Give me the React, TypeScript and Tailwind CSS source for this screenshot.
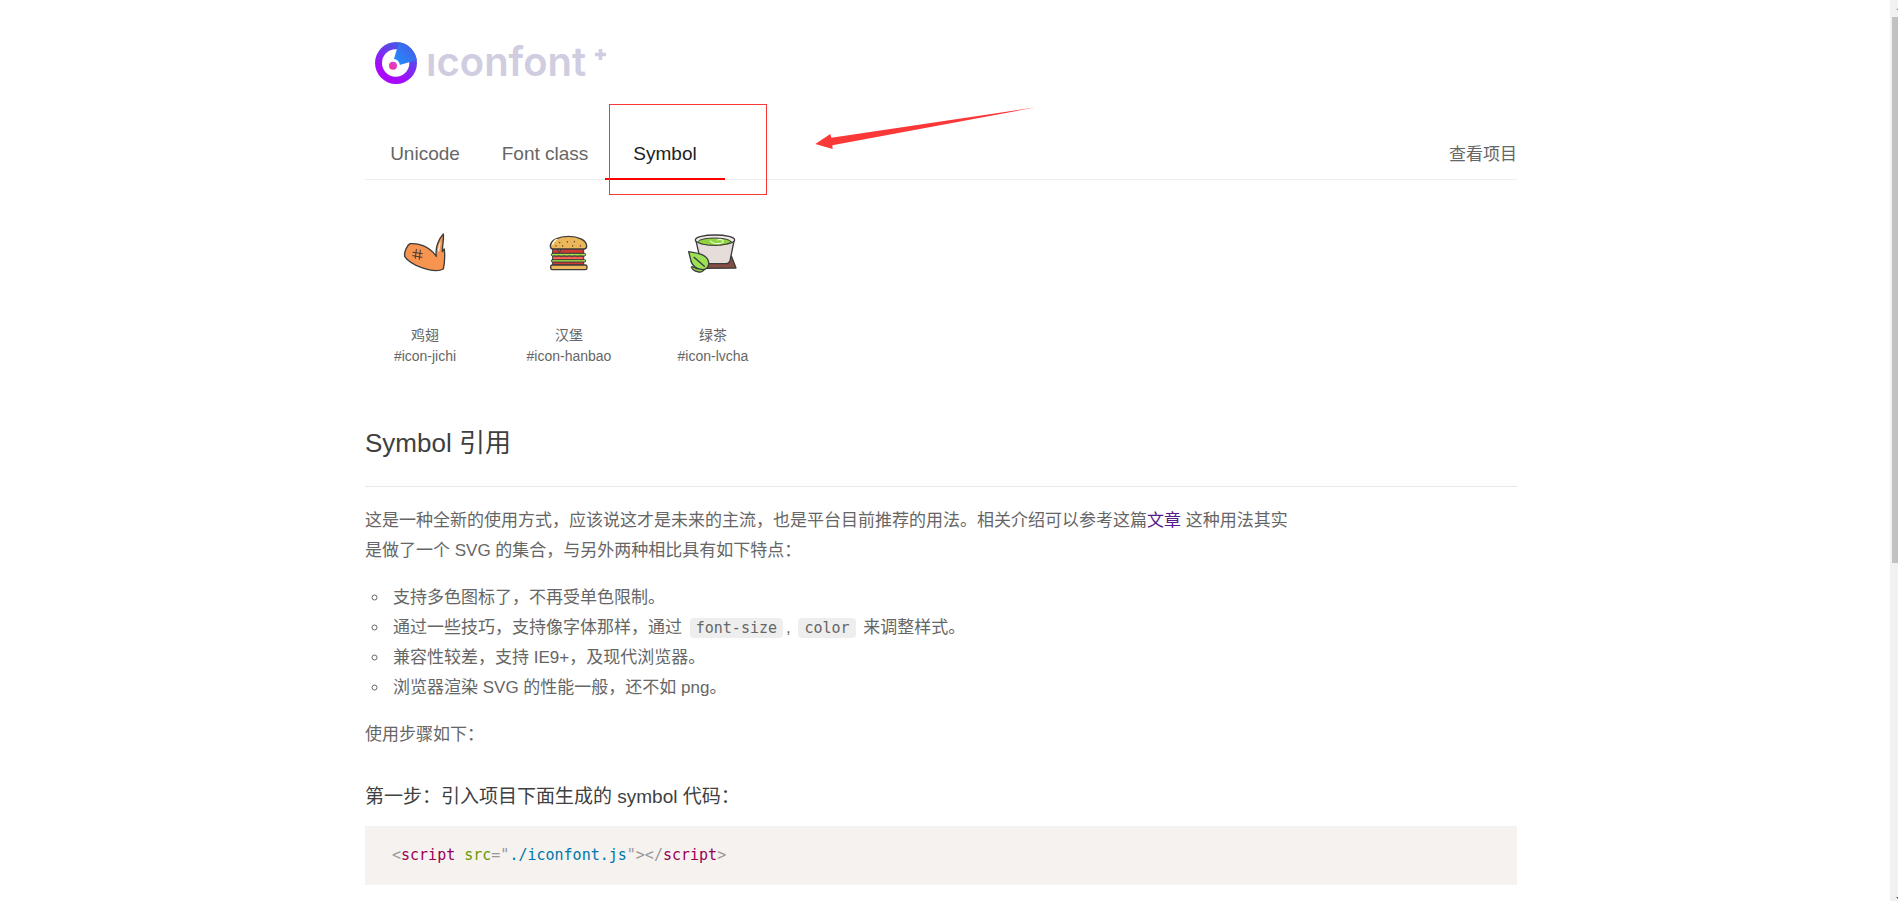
import React from 'react';

const Logo: React.FC = () => (
  <a href="#" className="flex items-center gap-[9px] pl-2.5" aria-label="iconfont">
    <svg className="h-[42px] w-[42px]" viewBox="45 36 126 126">
      <defs>
        <linearGradient id="ring" x1="0.2" y1="1" x2="0.8" y2="0">
          <stop offset="0" stopColor="#b400ff" />
          <stop offset="0.3" stopColor="#a010fa" />
          <stop offset="1" stopColor="#2f6be0" />
        </linearGradient>
        <linearGradient id="wedge" x1="0" y1="1" x2="1" y2="0">
          <stop offset="0" stopColor="#1f93ff" />
          <stop offset="1" stopColor="#4a55e2" />
        </linearGradient>
        <linearGradient id="dot" x1="0" y1="1" x2="1" y2="0">
          <stop offset="0" stopColor="#f5339b" />
          <stop offset="1" stopColor="#d840d8" />
        </linearGradient>
      </defs>
      <circle cx="108" cy="99" r="63" fill="url(#ring)" />
      <circle cx="107" cy="99" r="41" fill="#fff" />
      <path d="M117 37 A63 63 0 0 1 170 90 L119 105 L100 93 Z" fill="url(#wedge)" />
      <circle cx="98" cy="108" r="22" fill="#fff" />
      <circle cx="99" cy="107" r="12" fill="url(#dot)" />
    </svg>
    <span className="pb-0.5 font-[Inter,sans-serif] text-[40px] leading-10 font-semibold text-[#cfcddf]">ıconfont</span>
    <svg className="h-[42px] w-3" viewBox="0 0 12 42">
      <path d="M0 12.500h11M5.500 7v11" stroke="#cfcddf" strokeWidth="3.600" />
    </svg>
  </a>
);

const WingIcon: React.FC = () => (
  <svg className="h-[50px] w-[50px]" viewBox="60 39 150 150" strokeLinejoin="round" strokeLinecap="round">
    <path
      d="M90 86 C112 84 146 91 169 124 C165 98 176 72 190 57 C192 74 187 88 187 110 L193 102 C195 124 194 146 190 162 C176 170 150 167 125 158 C104 150 82 137 74 124 C72 112 80 92 90 86 Z"
      fill="#f79450"
      stroke="#3c3c3c"
      strokeWidth="4"
    />
    <path d="M174 112 C173 98 177 86 182 78 L179 105 Z" fill="#fde3d2" />
    <path d="M109 103 L106 130 M121 105 L118 133 M99 112 L127 116 M98 122 L126 127" fill="none" stroke="#3c3c3c" strokeWidth="3" />
  </svg>
);

const BurgerIcon: React.FC = () => (
  <svg className="h-[50px] w-[50px]" viewBox="42 39 150 150" strokeLinejoin="round" strokeLinecap="round">
    <rect x="69" y="101" width="92" height="14" fill="#d03a35" stroke="#3c3c3c" strokeWidth="3" />
    <rect x="69" y="122" width="92" height="13" fill="#f96350" stroke="#3c3c3c" strokeWidth="3" />
    <rect x="69" y="140" width="92" height="10" fill="#d03a35" stroke="#3c3c3c" strokeWidth="3" />
    <rect x="64" y="115" width="103" height="8" rx="4" fill="#a5e04b" stroke="#3c3c3c" strokeWidth="3" />
    <path d="M72 122l6 4 8-4 8 4 8-4 8 4 8-4 8 4 8-4 8 4 8-4 8 3" fill="none" stroke="#3c3c3c" strokeWidth="2" />
    <rect x="64" y="134" width="103" height="7" rx="3" fill="#a5e04b" stroke="#3c3c3c" strokeWidth="3" />
    <path d="M61 94 C61 54 170 54 170 94 Q169 102 162 102 H69 Q62 102 61 94 Z" fill="#ecb75b" stroke="#3c3c3c" strokeWidth="4" />
    <rect x="62" y="150" width="109" height="14" rx="5" fill="#ecb75b" stroke="#3c3c3c" strokeWidth="4" />
    <path d="M68 88 Q70 78 80 73" fill="none" stroke="#fff0ce" strokeWidth="4" />
    <path d="M89 82v1M112 80v1M133 79v1M78 92v1M98 92v1M128 92v1M151 92v1" stroke="#68502a" strokeWidth="4" />
    <path d="M84 103h9l-4 8z" fill="#9a9434" stroke="#3c3c3c" strokeWidth="3" />
  </svg>
);

const TeaIcon: React.FC = () => (
  <svg className="h-[50px] w-[50px]" viewBox="54 39 150 150" strokeLinejoin="round" strokeLinecap="round">
    <path d="M108 127 L184 123 L198 159 L108 160 Z" fill="#874d42" stroke="#3c3c3c" strokeWidth="4" />
    <path d="M77 73 L92 139 Q95 146 104 146 H168 Q177 146 180 137 L193 73 Z" fill="#e5ddd9" stroke="#3c3c3c" strokeWidth="4" />
    <ellipse cx="135" cy="75" rx="59" ry="15" fill="#f1ecea" stroke="#3c3c3c" strokeWidth="4" />
    <ellipse cx="134" cy="80" rx="49" ry="11" fill="#8fd33d" stroke="#3c3c3c" strokeWidth="3" />
    <path d="M121 78 Q127 87 147 86 Q166 82 157 75 Q149 71 142 75" fill="none" stroke="#e4f9cd" strokeWidth="4" />
    <path d="M64 156 Q73 154 80 161 L104 162 Q96 175 82 170 Q70 168 64 156 Z" fill="#8fd14b" stroke="#3c3c3c" strokeWidth="4" />
    <path d="M56 110 C77 114 105 116 114 135 C121 154 109 164 98 164 C80 163 64 151 62 134 Z" fill="#9be055" stroke="#3c3c3c" strokeWidth="4" />
    <path d="M72 127 L103 154" fill="none" stroke="#3c3c3c" strokeWidth="4" />
  </svg>
);

const tabs = ['Unicode', 'Font class', 'Symbol'];

const icons = [
  { name: '鸡翅', code: '#icon-jichi', Icon: WingIcon },
  { name: '汉堡', code: '#icon-hanbao', Icon: BurgerIcon },
  { name: '绿茶', code: '#icon-lvcha', Icon: TeaIcon },
];

const Code: React.FC<{ children: React.ReactNode }> = ({ children }) => (
  <code className="mx-[3px] rounded bg-[#eee] px-1.5 py-px font-['DejaVu_Sans_Mono',monospace] text-[15px]">
    {children}
  </code>
);

const Annotation: React.FC = () => (
  <>
    <div className="pointer-events-none absolute -top-[21px] left-[244px] h-[91px] w-[158px] border border-[#fb3838]" />
    <svg className="pointer-events-none absolute -top-[30px] left-[425px] h-[60px] w-[260px]" viewBox="0 0 780 180">
      <path d="M76 147 L121 117 L124 128 L737 37 L127 151 L128 162 Z" fill="#fb3838" />
    </svg>
  </>
);

const Scrollbar: React.FC = () => (
  <div className="flex w-2 flex-none flex-col items-end justify-between bg-[#f1f1f1]" aria-hidden="true">
    <svg className="h-[17px] w-2" viewBox="0 0 8 17">
      <path d="M6 10L10 6V10Z" fill="#a3a3a3" />
    </svg>
    <div className="flex w-1.5 flex-1 flex-col">
      <div className="basis-[63%] bg-[#c1c1c1]" />
    </div>
    <svg className="h-[17px] w-2" viewBox="0 0 8 17">
      <path d="M6 13L10 17V13Z" fill="#505050" />
    </svg>
  </div>
);

const App: React.FC = () => {
  return (
    <div className="flex min-h-screen bg-white font-['Liberation_Sans','Noto_Sans_CJK_SC',sans-serif] text-[17px] leading-[30px] text-[#666]">
      <div className="flex-1 pr-2">
        <main className="mx-auto max-w-[1152px] pt-[42px]">
          <h1 className="flex">
            <Logo />
          </h1>

          <nav className="relative mt-[41px] flex items-stretch justify-between border-b border-[#eee]">
            <div className="flex" role="tablist">
              {tabs.map((tab) => (
                <button
                  key={tab}
                  role="tab"
                  aria-selected={tab === 'Symbol'}
                  className={`-mb-px h-[55px] w-[120px] border-b-2 pt-1 text-[19px] ${
                    tab === 'Symbol' ? 'border-[#f00] text-[#222]' : 'border-transparent text-[#666]'
                  }`}
                >
                  {tab}
                </button>
              ))}
            </div>
            <a href="#" className="self-center pt-1.5">
              查看项目
            </a>
            <Annotation />
          </nav>

          <ul className="mt-12 flex gap-6 text-center text-[14px] leading-[21px]">
            {icons.map(({ name, code, Icon }) => (
              <li key={code} className="flex w-[120px] flex-col items-center">
                <Icon />
                <div className="mt-[47px]">{name}</div>
                <div>{code}</div>
              </li>
            ))}
          </ul>

          <article className="mt-12">
            <h2 className="border-b border-[#e9e9e9] pb-[15px] text-[26px] leading-[56px] text-[#404040]">
              Symbol 引用
            </h2>
            <div className="mt-[19px] max-w-[928px]">
              <p>
                这是一种全新的使用方式&#65292;应该说这才是未来的主流&#65292;也是平台目前推荐的用法。相关介绍可以参考这篇
                <a href="#" className="text-[#551a8b]">
                  文章
                </a>{' '}
                这种用法其实是做了一个 SVG 的集合&#65292;与另外两种相比具有如下特点&#65306;
              </p>
              <ul className="my-[17px] list-[circle] pl-6">
                <li className="pl-1">支持多色图标了&#65292;不再受单色限制。</li>
                <li className="pl-1">
                  通过一些技巧&#65292;支持像字体那样&#65292;通过 <Code>font-size</Code>, <Code>color</Code> 来调整样式。
                </li>
                <li className="pl-1">兼容性较差&#65292;支持 IE9+&#65292;及现代浏览器。</li>
                <li className="pl-1">浏览器渲染 SVG 的性能一般&#65292;还不如 png。</li>
              </ul>
              <p>使用步骤如下&#65306;</p>
            </div>
            <h3 className="mt-8 text-[19px] text-[#404040]">
              第一步&#65306;引入项目下面生成的 symbol 代码&#65306;
            </h3>
            <pre className="mt-3.5 bg-[#f5f2f0] px-[27px] py-[15px] font-['DejaVu_Sans_Mono',monospace] text-[15px] leading-[29px] text-[#999]">
              <code className="font-['DejaVu_Sans_Mono',monospace]">
                &lt;<span className="text-[#905]">script</span> <span className="text-[#690]">src</span>="
                <span className="text-[#07a]">./iconfont.js</span>"&gt;&lt;/
                <span className="text-[#905]">script</span>&gt;
              </code>
            </pre>
          </article>
        </main>
      </div>
      <Scrollbar />
    </div>
  );
};

export default App;
